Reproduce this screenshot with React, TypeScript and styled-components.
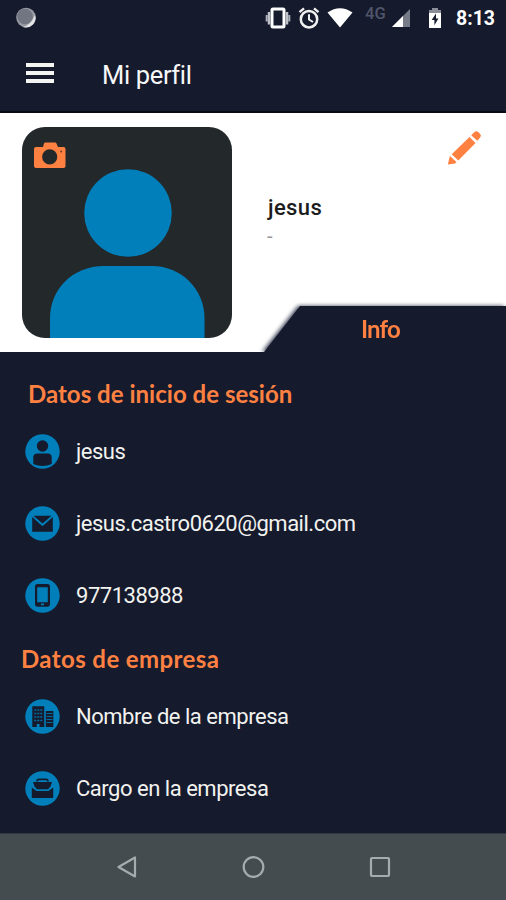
import React from "react";
import styled, { createGlobalStyle } from "styled-components";

const navy = "#151a2d";
const orange = "#ff8142";
const blue = "#007fba";

const GlobalStyle = createGlobalStyle`
  * { box-sizing: border-box; }
  body { margin: 0; background: ${navy}; font-family: Roboto, "Noto Sans", sans-serif; }
  svg { display: block; flex: none; }
`;

const Screen = styled.div`
  width: 506px;
  height: 900px;
  display: flex;
  flex-direction: column;
  background: ${navy};
  overflow: hidden;
`;

const StatusBar = styled.div`
  height: 36px;
  display: flex;
  align-items: center;
  padding: 0 10px 0 15px;
`;

const StatusIcons = styled.div`
  display: flex;
  align-items: center;
  margin-left: auto;
`;

const AlertIcons = styled.div`
  display: flex;
  align-items: center;
  gap: 7px;
`;

const Network = styled.span`
  width: 22px;
  margin: -8px 5px 0 12px;
  color: #50556a;
  font-size: 16.5px;
  font-weight: 500;
  line-height: 18px;
  white-space: nowrap;
`;

const PowerIcons = styled.div`
  display: flex;
  align-items: center;
  gap: 17px;
`;

const Clock = styled.span`
  width: 40px;
  margin-left: 14px;
  margin-top: 1px;
  color: #fff;
  font-size: 19.5px;
  font-weight: 700;
  line-height: 24px;
  white-space: nowrap;
`;

const AppBar = styled.header`
  height: 77px;
  display: flex;
  align-items: center;
  padding: 0 26px 1px;
  gap: 48px;
  border-bottom: 2px solid #070a14;
`;

const MenuIcon = styled.div`
  width: 28px;
  height: 20px;
  display: flex;
  flex-direction: column;
  justify-content: space-between;
`;

const MenuLine = styled.i`
  height: 4px;
  background: #f4f4f2;
`;

const Title = styled.h1`
  margin: 3px 0 0;
  color: #f7f7f7;
  font-size: 25.5px;
  font-weight: 400;
  line-height: 32px;
  letter-spacing: -0.35px;
`;

const Profile = styled.section`
  height: 239px;
  display: flex;
  background: #fff;
  overflow: hidden;
`;

const Avatar = styled.div`
  position: relative;
  width: 210px;
  height: 211px;
  margin: 14px 0 0 22px;
  border-radius: 23px;
  background: #23282a;
  overflow: hidden;
`;

const CameraBadge = styled.div`
  position: absolute;
  left: 12px;
  top: 15px;
`;

const Summary = styled.div`
  flex: 1;
  display: flex;
  flex-direction: column;
`;

const EditRow = styled.div`
  height: 72px;
  display: flex;
  justify-content: flex-end;
  padding: 17px 24px 0 0;
`;

const Name = styled.div`
  height: 41px;
  padding: 8px 0 0 36px;
  color: #1c1c1c;
  font-size: 22px;
  font-weight: 500;
  line-height: 30px;
  letter-spacing: 0.4px;
`;

const Detail = styled.div`
  padding-left: 35px;
  color: #969696;
  font-size: 20px;
  line-height: 20px;
`;

const TabShadow = styled.div`
  margin-top: auto;
  align-self: flex-end;
  filter: drop-shadow(-2px 0 2px #343a50);
`;

const Tab = styled.div`
  width: 242px;
  height: 46px;
  display: flex;
  align-items: center;
  justify-content: center;
  padding: 0 9px 2px 0;
  background: ${navy};
  clip-path: polygon(36px 0, 100% 0, 100% 100%, 0 100%);
  color: ${orange};
  font-family: Lato, sans-serif;
  font-size: 24px;
  font-weight: 700;
  letter-spacing: -0.8px;
`;

const Details = styled.main`
  flex: 1;
  padding-top: 21px;
`;

const Heading = styled.h2<{ $left: number; $spacing: number }>`
  height: 42px;
  margin: 0;
  padding-left: ${(p) => p.$left}px;
  color: ${orange};
  font-family: Lato, sans-serif;
  font-size: 24px;
  font-weight: 700;
  line-height: 41px;
  letter-spacing: ${(p) => p.$spacing}px;
  white-space: nowrap;
`;

const Rows = styled.div<{ $height: number }>`
  display: grid;
  grid-auto-rows: 72px;
  height: ${(p) => p.$height}px;
`;

const Row = styled.div`
  display: flex;
  align-items: center;
  gap: 16px;
  padding-left: 25px;
`;

const Value = styled.span`
  margin-top: 1px;
  color: #f2f2ef;
  font-size: 22px;
  line-height: 30px;
  letter-spacing: -0.48px;
  white-space: nowrap;
`;

const NavBar = styled.nav`
  height: 67px;
  display: flex;
  align-items: center;
  justify-content: space-between;
  padding: 0 114px 0 116px;
  border-top: 1px solid #303944;
  background: #454c50;
`;

type IconName = "person" | "mail" | "phone" | "building" | "briefcase";

const glyphs: Record<IconName, React.ReactNode> = {
  person: (
    <>
      <circle cx="17.5" cy="12" r="5.7" />
      <path d="M8.3 30V23.5Q8.3 19.4 12.4 19.4H22.6Q26.7 19.4 26.7 23.5V30Q22 32 17.5 32T8.3 30Z" />
    </>
  ),
  mail: (
    <>
      <path d="M7.2 11 17.5 20.3 27.8 11V25.8H7.2Z" />
      <path d="M8.5 9.7H26.5L17.5 17.5Z" />
    </>
  ),
  phone: (
    <path
      fillRule="evenodd"
      d="M12.6 6H22.4Q25 6 25 8.6V26.1Q25 28.7 22.4 28.7H12.6Q10 28.7 10 26.1V8.6Q10 6 12.6 6ZM12.2 9.2V24.2H22.8V9.2ZM16 25.5V27.2H19V25.5Z"
    />
  ),
  building: (
    <>
      <path d="M7.3 28V7.2H19.2V28ZM20.8 28V12H28.3V28Z" />
      <path
        d="M9.3 11H17.3M9.3 14.5H17.3M9.3 18H17.3M9.3 21.5H17.3"
        stroke={blue}
        strokeOpacity=".8"
        strokeWidth="1.5"
        strokeDasharray="2 1"
      />
      <path d="M21.5 14.5H27.5M21.5 17.5H27.5M21.5 20.5H27.5M21.5 23.5H27.5" stroke={blue} strokeOpacity=".8" strokeWidth="1" />
      <path d="M11.8 25H14.5V28H11.8Z" fill={blue} />
    </>
  ),
  briefcase: (
    <>
      <path d="M12 10.5Q12 8.4 14 8.4H21Q23 8.4 23 10.5" fill="none" stroke={navy} strokeWidth="1.6" />
      <path d="M8 11H27L25.5 15.5 23 18.3H12L9.5 15.5Z" />
      <path d="M6.8 16.5 11.5 20H23.5L28.2 16.5V27H6.8Z" />
    </>
  ),
};

const CircleIcon = ({ name }: { name: IconName }) => (
  <svg width="35" height="35" viewBox="0 0 35 35" fill={navy}>
    <circle cx="17.5" cy="17.5" r="17.2" fill={blue} />
    {glyphs[name]}
  </svg>
);

const Spinner = () => (
  <svg width="22" height="22" viewBox="0 0 22 22">
    <circle cx="11" cy="10.5" r="9.8" fill="#999ba4" />
    <circle cx="10" cy="9.5" r="7.8" fill="#727683" />
    <path d="M20 8A9.5 9.5 0 0 1 8 20Q16 18 20 8Z" fill="#e4e4e4" />
  </svg>
);

const VibrateIcon = () => (
  <svg width="26" height="24" viewBox="0 0 26 24">
    <rect x="7" y="3" width="12" height="18" rx="1" fill="none" stroke="#fff" strokeWidth="3" />
    <path d="M4 6V18.5M22 6V18.5" stroke="#bfc1c8" strokeWidth="2.5" />
    <path d="M1.7 9V15.5M24.3 9V15.5" stroke="#aeb1ba" strokeWidth="2" />
  </svg>
);

const AlarmIcon = () => (
  <svg width="22" height="24" viewBox="0 0 22 24" fill="none" stroke="#f1f1f1">
    <circle cx="11" cy="13.2" r="8.2" strokeWidth="2.5" />
    <path d="M1.5 6.2 6 2.3M20.5 6.2 16 2.3" strokeWidth="2.3" />
    <path d="M11 8.2V13.5L15 16" strokeWidth="2" />
  </svg>
);

const WifiIcon = () => (
  <svg width="26" height="24" viewBox="0 0 26 24">
    <path d="M0.5 6.5Q13-2 25.5 6.5L13 21.5Z" fill="#fff" />
  </svg>
);

const SignalIcon = () => (
  <svg width="19" height="20" viewBox="0 0 19 20">
    <path d="M18 1V19H0Z" fill="#777b88" />
    <path d="M11 8V19H0Z" fill="#fff" />
  </svg>
);

const BatteryIcon = () => (
  <svg width="14" height="22" viewBox="0 0 14 22">
    <path d="M4 1H10V3H13V7H1V3H4Z" fill="#8b8e98" />
    <path d="M1 6H13V21H1Z" fill="#fff" />
    <path d="M8 6.5 3.7 13H6.4V18.2L10.4 11.5H8Z" fill={navy} />
  </svg>
);

const PersonArt = () => (
  <svg width="210" height="211" viewBox="0 0 210 211" fill={blue}>
    <circle cx="106" cy="86" r="43.8" />
    <path d="M28 211V191C28 163 50 139 82 139H130C160 139 182.5 163 182.5 191V211Z" />
  </svg>
);

const CameraIcon = () => (
  <svg width="32" height="27" viewBox="0 0 32 27">
    <path
      fill={orange}
      fillRule="evenodd"
      d="M2 5H9L10 1.5Q10.5 .5 11.500 .5H21Q22 .5 22.5 1.5L24 5H29.5Q31.5 5 31.5 7V24Q31.5 26 29.5 26H2Q0 26 0 24V7Q0 5 2 5ZM15.7 7.2A7.6 7.6 0 1 0 15.7 22.4A7.6 7.6 0 1 0 15.7 7.2Z"
    />
    <circle cx="27.2" cy="9.5" r="1" fill="#703f29" />
  </svg>
);

const PencilIcon = () => (
  <svg width="36" height="36" viewBox="0 0 36 36" fill={orange}>
    <path d="M23.5 7 29.5 13 12.3 30.5 5.7 24.2Z" />
    <path d="M25.2 5.2 28.5 2Q30.5 .3 32.5 2.2L34 3.8Q35.9 5.7 34.2 7.6L31.3 10.8Z" />
    <path d="M3.9 25.9 10.5 32 9 33.5 1.8 34.5Z" />
  </svg>
);

const NavIcon = ({ children }: { children: React.ReactNode }) => (
  <svg width="24" height="24" viewBox="0 0 24 24" fill="none" stroke="#a6acae" strokeWidth="2.2" strokeLinejoin="round">
    {children}
  </svg>
);

export default function App() {
  return (
    <>
      <GlobalStyle />
      <Screen>
        <StatusBar>
          <Spinner />
          <StatusIcons>
            <AlertIcons>
              <VibrateIcon />
              <AlarmIcon />
              <WifiIcon />
            </AlertIcons>
            <Network>4G</Network>
            <PowerIcons>
              <SignalIcon />
              <BatteryIcon />
            </PowerIcons>
            <Clock>8:13</Clock>
          </StatusIcons>
        </StatusBar>
        <AppBar>
          <MenuIcon>
            <MenuLine />
            <MenuLine />
            <MenuLine />
          </MenuIcon>
          <Title>Mi perfil</Title>
        </AppBar>
        <Profile>
          <Avatar>
            <PersonArt />
            <CameraBadge>
              <CameraIcon />
            </CameraBadge>
          </Avatar>
          <Summary>
            <EditRow>
              <PencilIcon />
            </EditRow>
            <Name>jesus</Name>
            <Detail>-</Detail>
            <TabShadow>
              <Tab>Info</Tab>
            </TabShadow>
          </Summary>
        </Profile>
        <Details>
          <Heading $left={28} $spacing={0.02}>Datos de inicio de sesión</Heading>
          <Rows $height={223}>
            <Row><CircleIcon name="person" /><Value>jesus</Value></Row>
            <Row><CircleIcon name="mail" /><Value>jesus.castro0620@gmail.com</Value></Row>
            <Row><CircleIcon name="phone" /><Value>977138988</Value></Row>
          </Rows>
          <Heading $left={21} $spacing={0.4}>Datos de empresa</Heading>
          <Rows $height={144}>
            <Row><CircleIcon name="building" /><Value>Nombre de la empresa</Value></Row>
            <Row><CircleIcon name="briefcase" /><Value>Cargo en la empresa</Value></Row>
          </Rows>
        </Details>
        <NavBar>
          <NavIcon><path d="M19 2.5V21.5L2.5 12Z" /></NavIcon>
          <NavIcon><circle cx="11.5" cy="12" r="9.8" /></NavIcon>
          <NavIcon><rect x="3" y="3" width="18" height="18" rx="1" /></NavIcon>
        </NavBar>
      </Screen>
    </>
  );
}
